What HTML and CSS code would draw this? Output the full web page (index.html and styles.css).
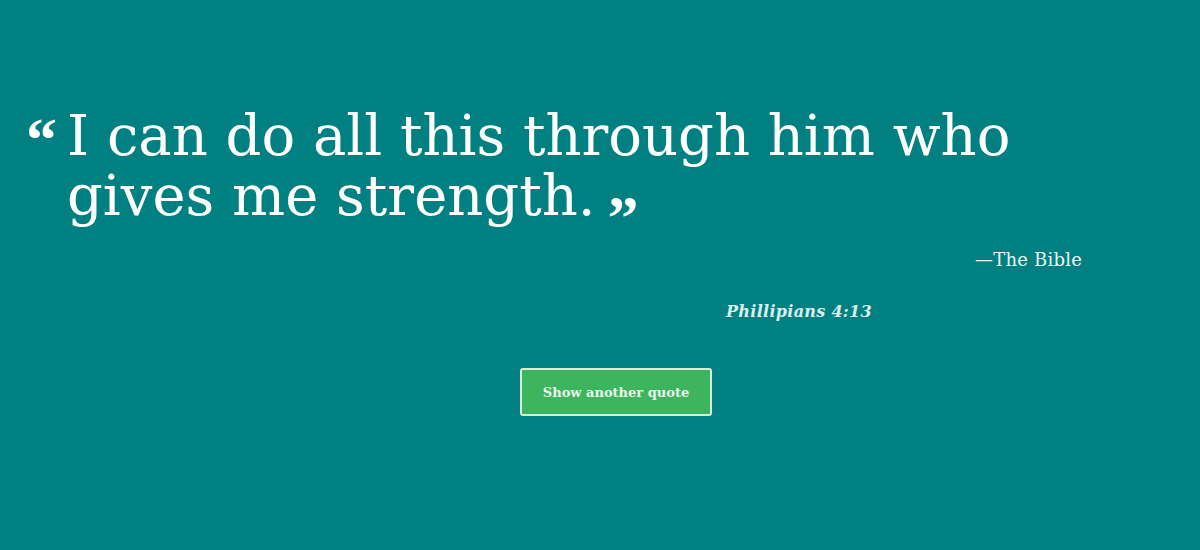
FILE: index.html
```html
<!DOCTYPE html>
<html>
<head>
<meta charset="utf-8">
<link rel="stylesheet" href="styles.css">
</head>
<body>
<main class="wrap">
  <blockquote class="quote">
    <span class="mark open">&ldquo;</span>
    <p class="text">I can do all this through him who gives me strength.<span class="mark close">&rdquo;</span></p>
  </blockquote>
  <p class="author">&mdash;The Bible</p>
  <p class="source">Phillipians 4:13</p>
  <div class="actions">
    <button class="btn">Show another quote</button>
  </div>
</main>
</body>
</html>
```
FILE: styles.css
```css
html, body {
  margin: 0;
  height: 100%;
  background: #008080;
}
body {
  font-family: "DejaVu Serif", "Liberation Serif", serif;
  color: #ffffff;
}
.wrap {
  padding: 106px 118px 0 26px;
  display: flex;
  flex-direction: column;
}
.quote {
  margin: 0;
  display: flex;
  align-items: flex-start;
  gap: 10px;
}
.mark {
  font-family: "Liberation Serif", serif;
  font-weight: bold;
  font-size: 62px;
  line-height: 20px;
}
.open {
  margin-top: 23px;
}
.close {
  margin-left: 12px;
  vertical-align: -23px;
}
.text {
  margin: 0;
  max-width: 1000px;
  font-size: 56px;
  line-height: 60px;
  letter-spacing: 0;
}
.author {
  margin: 22px 0 0;
  text-align: right;
  font-size: 18px;
  letter-spacing: 0.2px;
  color: #eef6f4;
}
.source {
  margin: 32px 0 0 700px;
  font-size: 16px;
  font-style: italic;
  font-weight: bold;
  letter-spacing: 0.3px;
  color: #dceeee;
}
.actions {
  margin: 47px 0 0 494px;
}
.btn {
  width: 192px;
  height: 48px;
  background: #3db55e;
  border: 2px solid #d7ecd9;
  border-radius: 3px;
  font-family: "DejaVu Serif", "Liberation Serif", serif;
  font-weight: bold;
  font-size: 13px;
  color: #eaf6ea;
  cursor: pointer;
}
```
